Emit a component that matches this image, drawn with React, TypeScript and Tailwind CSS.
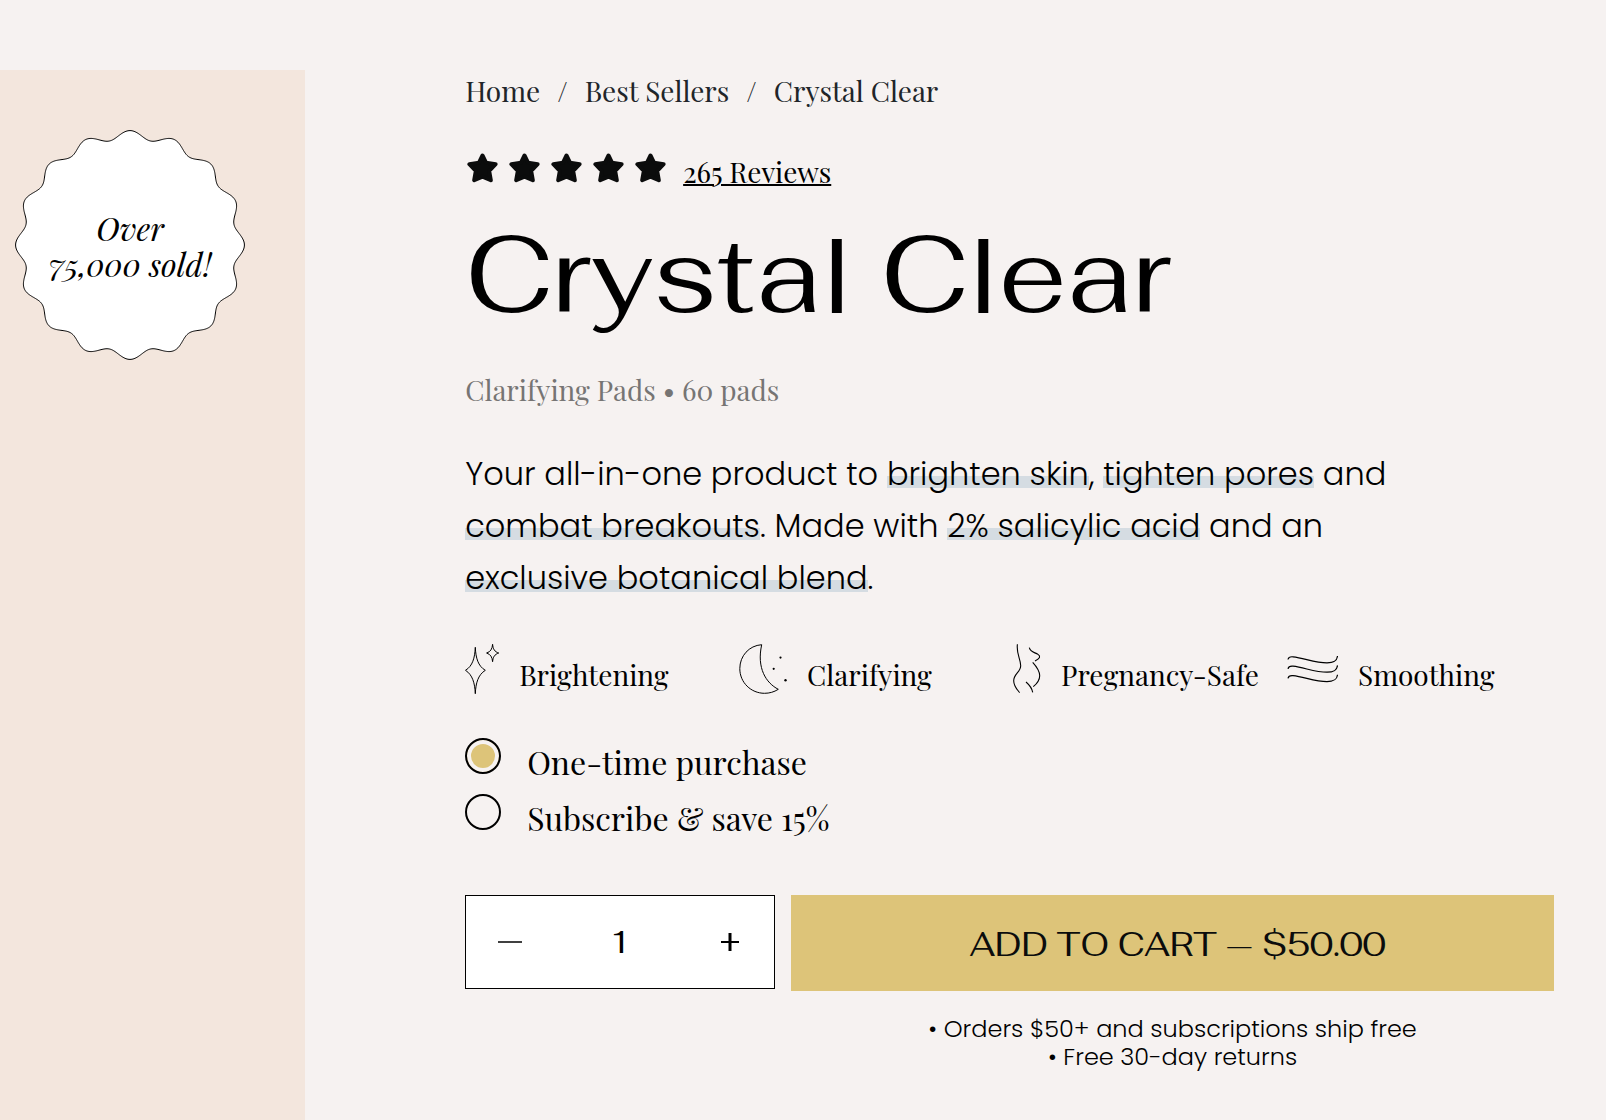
import { useState, type ReactNode } from "react";

const badgePath = (() => {
  const points: string[] = [];
  for (let i = 0; i < 720; i++) {
    const t = (i / 720) * Math.PI * 2;
    const r = 110.2 + 4.2 * Math.cos(16 * t);
    points.push(`${(116 + r * Math.sin(t)).toFixed(2)} ${(116 - r * Math.cos(t)).toFixed(2)}`);
  }
  return `M${points.join("L")}Z`;
})();

const crumbs = ["Home", "Best Sellers", "Crystal Clear"];

function SparkleIcon() {
  return (
    <svg width="34" height="50" viewBox="0 0 34 50" fill="none" stroke="currentColor" aria-hidden="true">
      <path d="M10.3 3.3C10.8 14 13 22 20.3 26.3C13 31 10.8 39 10.3 49.7C9.8 39 7.6 31 .5 26.3C7.6 22 9.8 14 10.3 3.3Z" />
      <path d="M27.6 .3C28 5 29.6 7.8 33.7 9C29.6 10.4 28 13 27.6 17.7C27.2 13 25.6 10.4 21.6 9C25.6 7.8 27.2 5 27.6 .3Z" />
    </svg>
  );
}

function MoonIcon() {
  return (
    <svg width="48" height="50" viewBox="0 0 48 50" fill="none" stroke="currentColor" aria-hidden="true">
      <path d="M22.7 .7C10 1.5 .8 12 .8 24.6C.8 38.5 12 49.3 25.5 49.3C30.5 49.3 35 48 39.3 45.3C27 39 17.5 24 22.7 .7Z" />
      <g fill="currentColor" stroke="none">
        <circle cx="41.5" cy="13.6" r="1.1" />
        <circle cx="34.7" cy="24.8" r="1.1" />
        <circle cx="46.5" cy="36.3" r="1.2" />
      </g>
    </svg>
  );
}

function BellyIcon() {
  return (
    <svg width="28" height="50" viewBox="0 0 28 50" fill="none" stroke="currentColor" strokeWidth="1.1" aria-hidden="true">
      <path d="M4.4 .3C3.2 10 7.7 15 7.7 21.7C7.7 28 .7 30 .7 36.7C.7 42 3.5 45 6.7 48.7" />
      <path d="M16.3 3.7C17.5 8.5 22 8.3 25 10.4C28 12.5 27 14.5 22 17" />
      <path d="M19.7 18.3C24 23 26.7 27 26.7 31.7C26.7 36.5 23.5 40 20.3 42.7" />
      <path d="M13 38C16.5 41 19 44.5 19.7 48.3" />
    </svg>
  );
}

function WavesIcon() {
  const wave = "M1 15.5C1.5 13 3 12.5 6 12.8C17 14 28 18.8 40 18.8C47 18.8 50 17 50.5 12";
  return (
    <svg width="51" height="50" viewBox="0 0 51 50" fill="none" stroke="currentColor" strokeWidth="1.2" aria-hidden="true">
      <path d={wave} />
      <path d={wave} transform="translate(0 9.4)" />
      <path d={wave} transform="translate(0 18.8)" />
    </svg>
  );
}

const features = [
  { label: "Brightening", icon: <SparkleIcon /> },
  { label: "Clarifying", icon: <MoonIcon /> },
  { label: "Pregnancy-Safe", icon: <BellyIcon /> },
  { label: "Smoothing", icon: <WavesIcon /> },
];

const plans = [
  { id: "once", label: "One-time purchase" },
  { id: "subscribe", label: "Subscribe & save 15%" },
];

function Star() {
  return (
    <svg
      width="32"
      height="32"
      viewBox="0 0 32 32"
      fill="currentColor"
      stroke="currentColor"
      strokeWidth="4"
      strokeLinejoin="round"
      aria-hidden="true"
    >
      <path d="M15.5 3.5L19 10.6L28.6 12.2L22.2 19L23.8 28.2L15.5 24.6L7.2 28.2L8.8 19L2.4 12.2L12 10.6Z" />
    </svg>
  );
}

function Mark({ children }: { children: ReactNode }) {
  return (
    <mark className="bg-transparent bg-linear-[transparent_55%,#d5dce2_55%,#d5dce2_82%,transparent_82%] text-inherit">
      {children}
    </mark>
  );
}

export default function App() {
  const [plan, setPlan] = useState("once");
  const [quantity, setQuantity] = useState(1);

  return (
    <main className="flex min-h-screen bg-[#f6f2f1] pt-[70px] font-['Playfair_Display','Liberation_Serif',serif] text-black">
      <aside className="w-[19%] shrink-0 bg-[#f3e6dd] pt-[59px] pl-3.5">
        <div className="relative size-[232px]">
          <svg className="size-full" viewBox="0 0 232 232" fill="white" stroke="black" aria-hidden="true">
            <path d={badgePath} />
          </svg>
          <p className="absolute inset-0 flex items-center justify-center pt-0.5 text-center text-[32px] leading-9 italic">
            Over
            <br />
            75,000 sold!
          </p>
        </div>
      </aside>

      <section className="min-w-0 flex-1 pr-[52px] pl-40">
        <nav aria-label="Breadcrumb" className="pt-[3px]">
          <ol className="flex text-[28px] leading-9 text-[#212529]">
            {crumbs.map((crumb, i) => (
              <li key={crumb}>
                {i > 0 && <span className="px-[17px]">/</span>}
                <a href="#">{crumb}</a>
              </li>
            ))}
          </ol>
        </nav>

        <div className="mt-[39px] flex h-10 items-center gap-4 pl-0.5">
          <div className="flex gap-2.5 text-[#0b0c0c]" role="img" aria-label="5 out of 5 stars">
            {[1, 2, 3, 4, 5].map((n) => (
              <Star key={n} />
            ))}
          </div>
          <a href="#reviews" className="pt-2 text-[28px] leading-8 underline decoration-2">
            265 Reviews
          </a>
        </div>

        <h1 className="mt-4 font-['Fahkwang','DejaVu_Sans',sans-serif] text-[108px] leading-[140px]">
          Crystal Clear
        </h1>

        <p className="mt-7 text-[28px] leading-9 text-[#767574]">Clarifying Pads • 60 pads</p>

        <p className="mt-10 max-w-[980px] font-[Poppins,Inter,sans-serif] text-[32px] leading-[52px] font-light">
          Your all-in-one product to <Mark>brighten skin</Mark>, <Mark>tighten pores</Mark> and{" "}
          <Mark>combat breakouts</Mark>. Made with <Mark>2% salicylic acid</Mark> and an{" "}
          <Mark>exclusive botanical blend</Mark>.
        </p>

        <ul className="mt-10 grid grid-cols-4 gap-[7px]">
          {features.map((feature) => (
            <li key={feature.label} className="flex gap-5">
              <span className="shrink-0">{feature.icon}</span>
              <span className="pt-[13px] text-[28px] leading-9 whitespace-nowrap">{feature.label}</span>
            </li>
          ))}
        </ul>

        <fieldset className="mt-11 flex flex-col gap-3">
          {plans.map((option) => (
            <label key={option.id} className="flex h-11 items-start gap-[26px] text-[32px] leading-10">
              <input
                type="radio"
                name="plan"
                value={option.id}
                checked={plan === option.id}
                onChange={() => setPlan(option.id)}
                className="size-9 shrink-0 appearance-none rounded-full border-2 border-black checked:bg-[#ddc479] checked:shadow-[inset_0_0_0_4px_#f6f2f1]"
              />
              <span className="pt-1">{option.label}</span>
            </label>
          ))}
        </fieldset>

        <div className="mt-[57px] flex items-start gap-4 font-['Fahkwang','DejaVu_Sans',sans-serif]">
          <div className="flex h-[94px] w-[310px] shrink-0 items-center justify-between border border-black bg-white px-7">
            <button
              type="button"
              aria-label="Decrease quantity"
              className="flex size-8 items-center justify-center"
              onClick={() => setQuantity(Math.max(1, quantity - 1))}
            >
              <svg width="24" height="24" viewBox="0 0 24 24" stroke="currentColor" strokeWidth="1.5" aria-hidden="true">
                <path d="M0 12H24" />
              </svg>
            </button>
            <input
              aria-label="Quantity"
              inputMode="numeric"
              value={quantity}
              onChange={(e) => setQuantity(Number(e.target.value) || 1)}
              className="w-20 text-center text-[32px] leading-10"
            />
            <button
              type="button"
              aria-label="Increase quantity"
              className="flex size-8 items-center justify-center"
              onClick={() => setQuantity(quantity + 1)}
            >
              <svg width="20" height="20" viewBox="0 0 20 20" stroke="currentColor" aria-hidden="true">
                <path d="M1 10H19" strokeWidth="2" />
                <path d="M10 1V19" strokeWidth="3" />
              </svg>
            </button>
          </div>
          <div className="flex-1">
            <button type="button" className="h-24 w-full bg-[#ddc479] pt-1 pl-2.5 text-[33px] text-[#0b0c0c]">
              ADD TO CART — $50.00
            </button>
            <ul className="mt-6 text-center font-[Poppins,Inter,sans-serif] text-2xl leading-7 font-light">
              <li>• Orders $50+ and subscriptions ship free</li>
              <li>• Free 30-day returns</li>
            </ul>
          </div>
        </div>
      </section>
    </main>
  );
}
